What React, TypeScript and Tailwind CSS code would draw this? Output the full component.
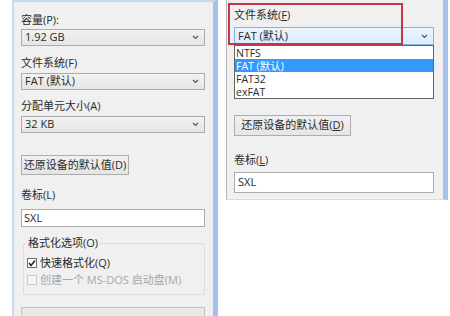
import React from 'react';

function Chevron() {
  return (
    <svg width="7" height="5" viewBox="0 0 7 5" className="shrink-0">
      <path d="M1 1 L3.5 3.5 L6 1" fill="none" stroke="#555" strokeWidth="1.2" />
    </svg>
  );
}

function Select({ value, focused = false }: { value: string; focused?: boolean }) {
  return (
    <div
      className={
        focused
          ? 'flex h-[18px] items-center justify-between border border-[#7eb4ea] bg-gradient-to-b from-[#ecf4fc] to-[#dcecfc] pl-[3px] pr-[5px]'
          : 'flex h-[17px] items-center justify-between border border-[#acacac] bg-gradient-to-b from-[#f2f2f2] to-[#e5e5e5] pl-[3px] pr-[5px]'
      }
    >
      <span>{value}</span>
      <Chevron />
    </div>
  );
}

function Check({ checked, disabled }: { checked?: boolean; disabled?: boolean }) {
  return (
    <span
      className={
        disabled
          ? 'flex h-[10px] w-[10px] items-center justify-center border border-[#c8c8c8] bg-[#f4f4f4]'
          : 'flex h-[10px] w-[10px] items-center justify-center border border-[#707070] bg-white'
      }
    >
      {checked && (
        <svg width="8" height="8" viewBox="0 0 8 8">
          <path d="M1 4 L3 6.5 L7 1.5" fill="none" stroke="#222" strokeWidth="1.6" />
        </svg>
      )}
    </span>
  );
}

function LeftPanel() {
  return (
    <div className="ml-[12px] h-[316px] w-[206px] shrink-0 overflow-hidden border-l-2 border-r-[5px] border-t-2 border-l-[#c6d9f0] border-r-[#a3c1ea] border-t-[#c6d9f0] bg-[#f0f0f0] pl-[7px] pr-[8px] pt-[11px]">
      <div className="h-[14px] leading-[14px]">容量(P):</div>
      <div className="mt-[2px]">
        <Select value="1.92 GB" />
      </div>
      <div className="mt-[10px] h-[14px] leading-[14px]">文件系统(F)</div>
      <div className="mt-[3px]">
        <Select value="FAT (默认)" />
      </div>
      <div className="mt-[9px] h-[14px] leading-[14px]">分配单元大小(A)</div>
      <div className="mt-[3px]">
        <Select value="32 KB" />
      </div>
      <button className="mt-[22px] flex h-[20px] w-[108px] items-center justify-center border border-[#adadad] bg-gradient-to-b from-[#f0f0f0] to-[#e5e5e5]">
        还原设备的默认值(D)
      </button>
      <div className="mt-[13px] h-[14px] leading-[14px]">卷标(L)</div>
      <div className="mt-[7px] flex h-[18px] items-center border border-[#acacac] bg-white pl-[2px]">SXL</div>
      <fieldset className="ml-[2px] mt-[9px] rounded-[2px] border border-[#dcdcdc] px-[2px] pb-[7px]">
        <legend className="px-[2px] leading-[14px]">格式化选项(O)</legend>
        <div className="mt-[6px] flex h-[14px] items-center gap-[3px] pl-[1px]">
          <Check checked />
          <span>快速格式化(Q)</span>
        </div>
        <div className="mt-[3px] flex h-[14px] items-center gap-[3px] pl-[1px] text-[#a8a8a8]">
          <Check disabled />
          <span>创建一个 MS-DOS 启动盘(M)</span>
        </div>
      </fieldset>
      <div className="mt-[12px] h-[20px] border border-[#c4c4c4] bg-[#e8e8e8]" />
    </div>
  );
}

function RightPanel() {
  const items = ['NTFS', 'FAT (默认)', 'FAT32', 'exFAT'];
  return (
    <div className="relative ml-[8px] h-[200px] w-[222px] shrink-0 border-b border-l border-r-[5px] border-b-[#dadada] border-l-[#b4b4b4] border-r-[#a3c1ea] bg-[#f0f0f0] pl-[7px] pr-[9px] pt-[8px]">
      <div className="h-[14px] leading-[14px]">
        文件系统(<span className="underline">F</span>)
      </div>
      <div className="relative mt-[5px]">
        <Select value="FAT (默认)" focused />
        <div className="absolute left-0 right-0 top-full z-10 border border-[#646464] bg-white text-[10.5px]">
          {items.map((it, i) => (
            <div
              key={it}
              className={
                i === 1
                  ? 'flex h-[13px] items-center overflow-hidden bg-[#3399ff] pl-[1px] leading-[12px] text-white'
                  : 'flex h-[13px] items-center overflow-hidden pl-[1px] leading-[12px]'
              }
            >
              {it}
            </div>
          ))}
        </div>
      </div>
      <button className="mt-[70px] flex h-[21px] w-[117px] items-center justify-center border border-[#adadad] bg-gradient-to-b from-[#f0f0f0] to-[#e5e5e5]">
        还原设备的默认值(<span className="underline">D</span>)
      </button>
      <div className="mt-[17px] h-[14px] leading-[14px]">
        卷标(<span className="underline">L</span>)
      </div>
      <div className="mt-[5px] flex h-[21px] items-center border border-[#acacac] bg-white pl-[3px]">SXL</div>
      <div className="pointer-events-none absolute left-[1px] top-[3px] z-20 h-[42px] w-[175px] border-2 border-[#c4364e]" />
    </div>
  );
}

export default function App() {
  return (
    <div className="flex h-[316px] w-[450px] items-start overflow-hidden bg-white font-['Open_Sans','Noto_Sans_CJK_SC',sans-serif] text-[11px] text-[#2a2a2a]">
      <LeftPanel />
      <RightPanel />
    </div>
  );
}
